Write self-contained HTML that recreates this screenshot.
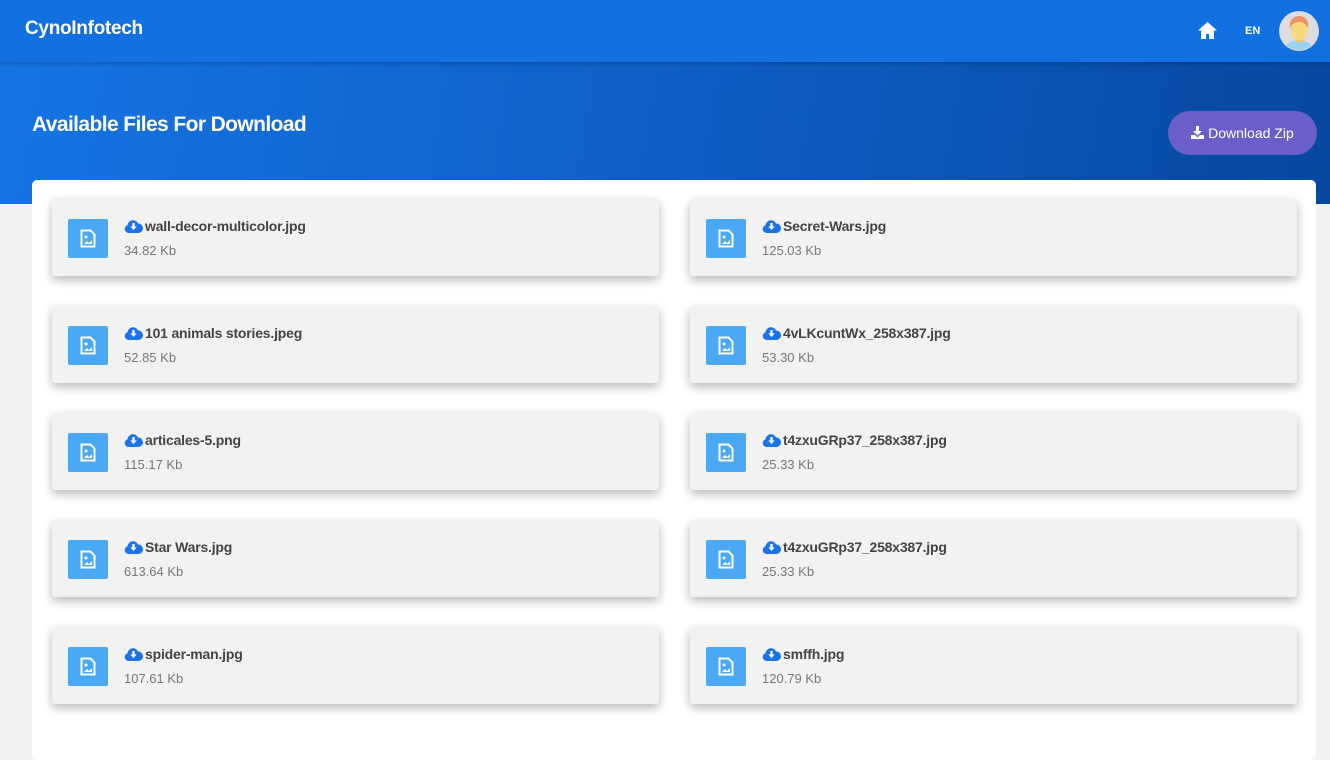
<!DOCTYPE html><html><head><style>
*{box-sizing:border-box;margin:0;padding:0}
body{width:1330px;height:755px;overflow:hidden;background:#f2f2f2;font-family:"Liberation Sans",sans-serif;position:relative}
.nav{position:absolute;left:0;top:0;width:1330px;height:62px;background:#1370e0;box-shadow:0 2px 4px rgba(0,0,0,.2);z-index:2}
.brand{position:absolute;left:25px;top:18px;color:#fff;font-size:19px;font-weight:bold;letter-spacing:-.3px}
.hero{position:absolute;left:0;top:62px;width:1330px;height:142px;background:linear-gradient(100deg,#1574e4 0%,#0f5ec4 50%,#0747a0 100%)}
.hero h1{position:absolute;left:32px;top:51px;color:#fff;font-size:21px;font-weight:bold;letter-spacing:-.6px}
.btn{position:absolute;left:1168px;top:111px;width:149px;height:44px;border-radius:22px;background:#6a5fc8;color:#fff;font-size:14px;line-height:44px;text-align:center;z-index:2}
.card{position:absolute;left:32px;top:180px;width:1284px;height:580px;background:#fff;border-radius:5px}
.item{position:absolute;width:607px;height:77px;background:#f2f2f2;border-radius:3px;box-shadow:0 4px 10px rgba(0,0,0,.28)}
.ic{position:absolute;left:16px;top:20px;width:40px;height:39px;background:#4aa8f5;border-radius:2px}
.ic svg{position:absolute;left:12px;top:10px}
.t{position:absolute;left:72px;top:19px;font-size:14px;color:#444;font-weight:bold;white-space:nowrap;letter-spacing:-.2px}
.t svg{vertical-align:-2px;margin-right:2px}
.s{position:absolute;left:72px;top:44px;font-size:13px;color:#777}
</style></head><body>
<div class="nav"><div class="brand">CynoInfotech</div>
<svg style="position:absolute;left:1197px;top:21px" width="21" height="19" viewBox="0 0 21 19"><path d="M10.5 1L1 9.5h3V18h5v-5h3v5h5V9.5h3z" fill="#fff"/></svg>
<div style="position:absolute;left:1245px;top:25px;color:#fff;font-size:11px;font-weight:bold">EN</div>
<svg style="position:absolute;left:1279px;top:11px" width="40" height="40" viewBox="0 0 40 40"><circle cx="20" cy="20" r="20" fill="#ddd"/><clipPath id="c"><circle cx="20" cy="20" r="19"/></clipPath><g clip-path="url(#c)"><path d="M5 40c2-8 8-11 15-11s13 3 15 11z" fill="#9ad0f0"/><rect x="16" y="24" width="8" height="7" fill="#f5c96a"/><ellipse cx="20" cy="19" rx="8" ry="10" fill="#f9d97a"/><path d="M11 17c-1-9 5-12 9-12s11 3 9 12c-2-4-5-6-9-6s-7 2-9 6z" fill="#f0906a"/></g></svg>
</div>
<div class="hero"><h1>Available Files For Download</h1></div>
<div class="btn"><svg width="13" height="13" viewBox="0 0 13 13" style="vertical-align:-1px"><path d="M5 0h3v5h3L6.5 9.5 2 5h3z M0 9h4l2.5 2.5L9 9h4v4H0z" fill="#fff"/></svg> Download Zip</div>
<div class="card"></div>
<div id="items"></div>
<script>
var d=[["wall-decor-multicolor.jpg","34.82 Kb"],["Secret-Wars.jpg","125.03 Kb"],["101 animals stories.jpeg","52.85 Kb"],["4vLKcuntWx_258x387.jpg","53.30 Kb"],["articales-5.png","115.17 Kb"],["t4zxuGRp37_258x387.jpg","25.33 Kb"],["Star Wars.jpg","613.64 Kb"],["t4zxuGRp37_258x387.jpg","25.33 Kb"],["spider-man.jpg","107.61 Kb"],["smffh.jpg","120.79 Kb"]];
var h="";d.forEach(function(e,i){var x=i%2?690:52,y=199+Math.floor(i/2)*107;
h+='<div class="item" style="left:'+x+'px;top:'+y+'px"><div class="ic"><svg width="16" height="19" viewBox="0 0 16 19"><path d="M1.5 1.5h9l4 4v12h-13z" fill="none" stroke="#fff" stroke-width="2"/><circle cx="6" cy="8" r="1.5" fill="#fff"/><path d="M4 15l3-3 2 2 3-3v4z" fill="#fff"/></svg></div><div class="t"><svg width="19" height="14" viewBox="0 0 19 14"><path d="M4.5 14a4 4 0 0 1-1-7.8A5.5 5.5 0 0 1 14 4.5a4.5 4.5 0 0 1 .5 9.5z" fill="#1a73e8"/><path d="M8.3 4h2.4v3.5h2L9.5 11 6.3 7.5h2z" fill="#fff"/></svg>'+e[0]+'</div><div class="s">'+e[1]+'</div></div>';});
document.getElementById("items").innerHTML=h;
</script>
</body></html>
